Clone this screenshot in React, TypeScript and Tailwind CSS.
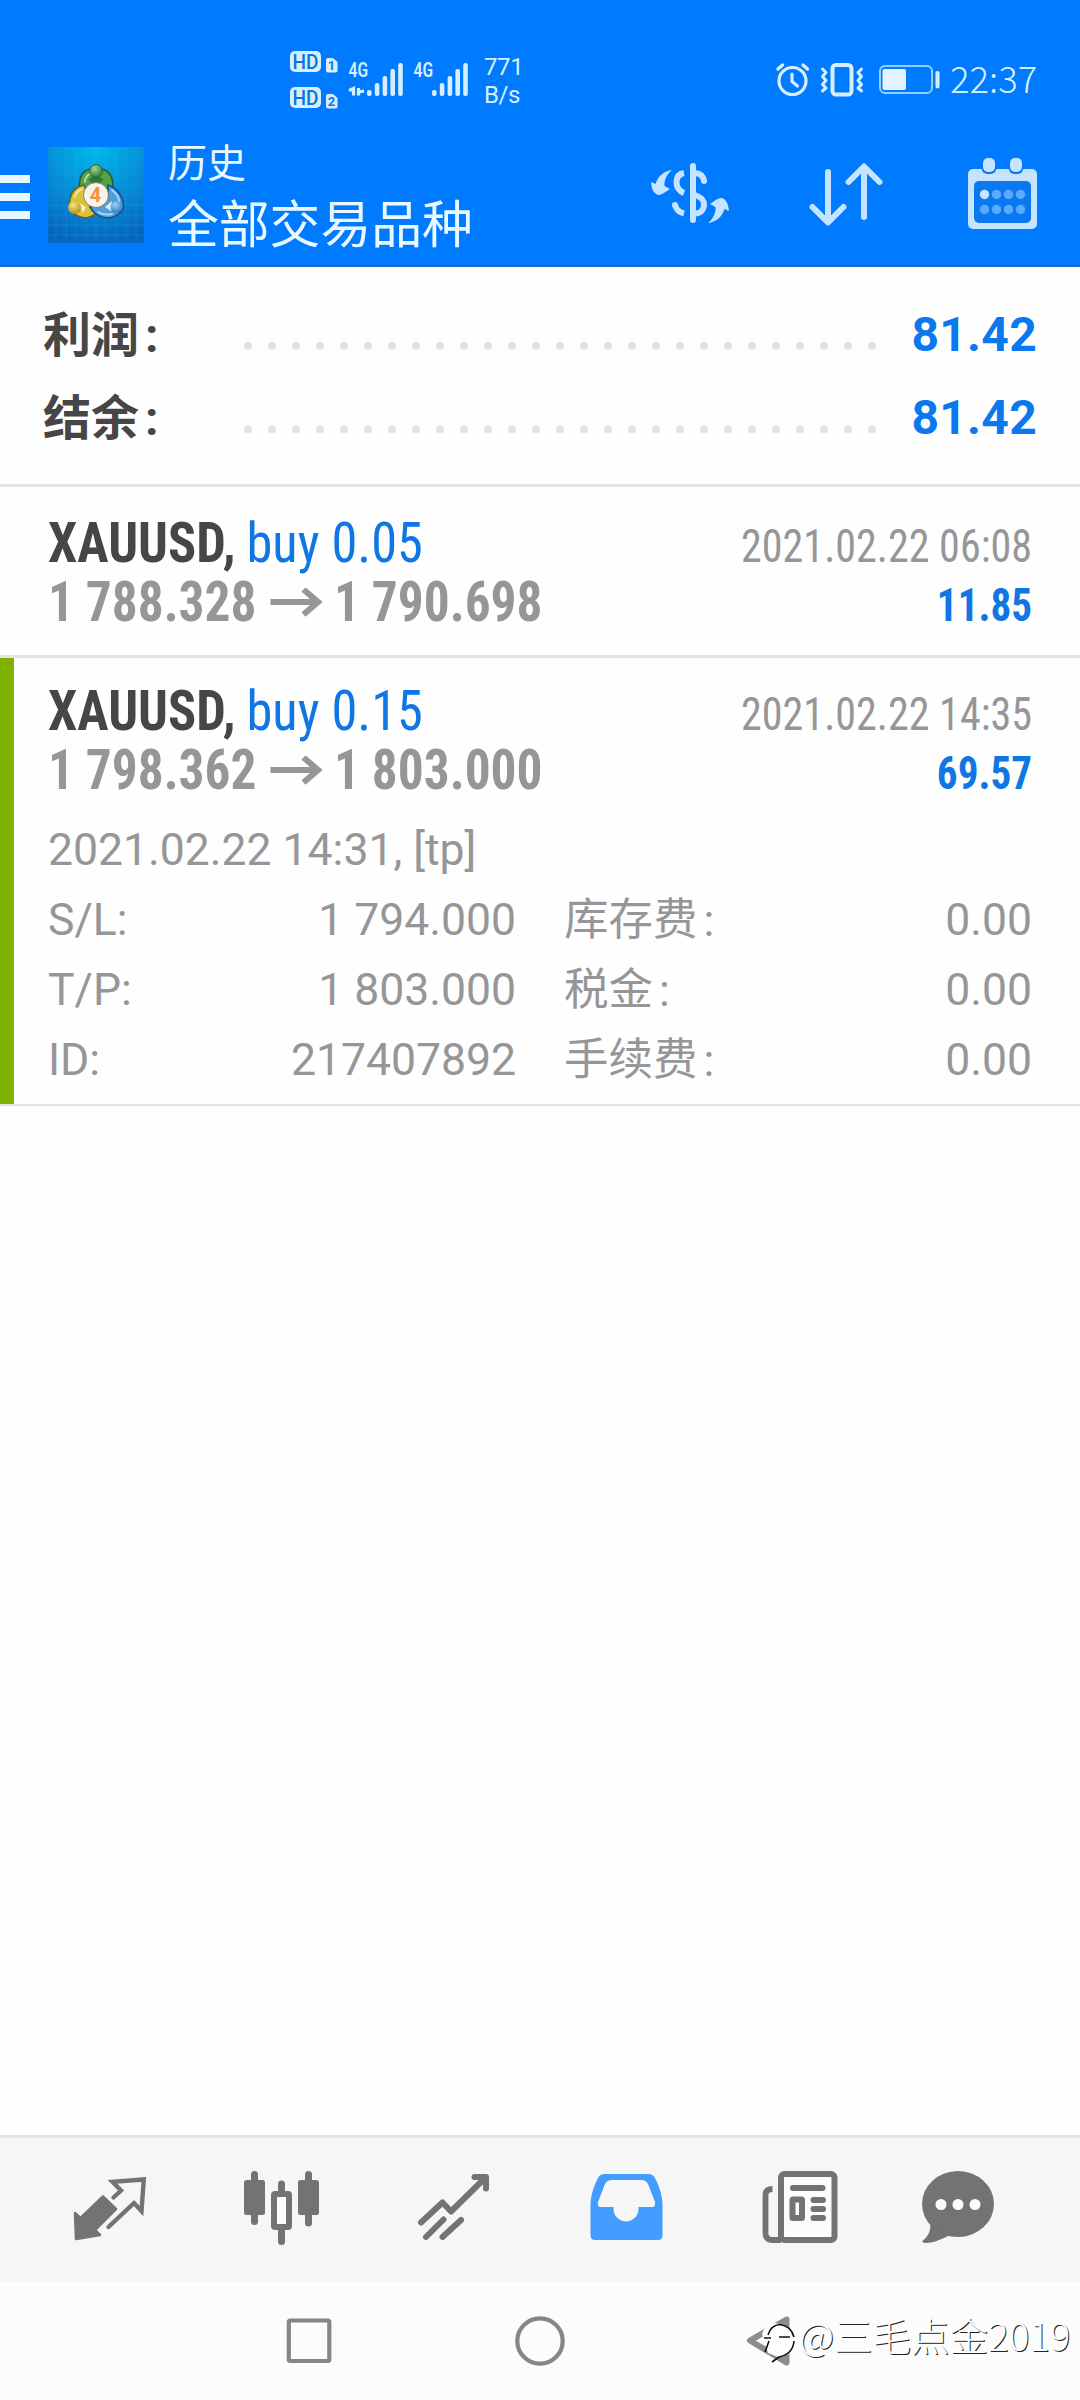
import type { ReactNode } from 'react';

const pale = '#d6efff';
const gray = '#737373';

function SignalBars({ x }: { x: number }) {
  const tops = [90, 83, 76, 69, 63];
  return (
    <g fill={pale}>
      {tops.map((top, i) => (
        <rect key={top} x={x + i * 7.8} y={top} width="4.6" height={96 - top} rx="2" />
      ))}
    </g>
  );
}

function HdBadge({ y, n }: { y: number; n: string }) {
  return (
    <g>
      <rect x="290" y={y} width="31" height="21" rx="5" fill={pale} />
      <text x="305.5" y={y + 17.5} fontSize="20.500" fontWeight="500" textAnchor="middle" textLength="26" lengthAdjust="spacingAndGlyphs" fill="#0c74e4">HD</text>
      <path d={`M326 ${y + 9} q0 -2 2 -2 h5 l4.500 4 v8.500 q0 2 -2 2 h-7.500 q-2 0 -2 -2 z`} fill={pale} />
      <text x="331.500" y={y + 19} fontSize="13" fontWeight="700" textAnchor="middle" fill="#0c74e4">{n}</text>
    </g>
  );
}

function StatusLeft() {
  return (
    <svg className="block h-[70px] w-[186px]" viewBox="286 45 186 70" fontFamily="Roboto, sans-serif">
      <HdBadge y={51} n="1" />
      <HdBadge y={87} n="2" />
      <text x="348.500" y="77" fontSize="20.500" fontWeight="600" textLength="19.500" lengthAdjust="spacingAndGlyphs" fill={pale}>4G</text>
      <path d="M349 90.500 L353.500 88.500 V95.500 M358.500 88 V95.500 M359 92 L364 91" fill="none" stroke={pale} strokeWidth="3.200" />
      <SignalBars x={367} />
      <text x="413.500" y="77" fontSize="20.500" fontWeight="600" textLength="19.500" lengthAdjust="spacingAndGlyphs" fill={pale}>4G</text>
      <SignalBars x={432} />
    </svg>
  );
}

function StatusRight() {
  return (
    <svg className="block h-[50px] w-[172px]" viewBox="772 55 172 50" fill="none" stroke={pale} strokeLinecap="round" strokeLinejoin="round">
      <circle cx="792.500" cy="81" r="13.500" strokeWidth="3.200" />
      <path d="M792 74 V81.500 L797.500 86" strokeWidth="3.200" />
      <path d="M778 69 L782.500 65 M807.500 69 L803 65" strokeWidth="3.400" />
      <rect x="832.500" y="65" width="19" height="29.500" rx="3.500" strokeWidth="4" />
      <path d="M822.500 69 L826 72.500 L822.500 76.500 L826 80.500 L822.500 84.500 L826 88 L822.500 91" strokeWidth="3" />
      <path d="M861.500 69 L858 72.500 L861.500 76.500 L858 80.500 L861.500 84.500 L858 88 L861.500 91" strokeWidth="3" />
      <rect x="880" y="66" width="52" height="27" rx="5" strokeWidth="2" stroke="#8fd0ff" />
      <rect x="882.500" y="69" width="23.500" height="21" rx="2" fill="#e6f2ff" stroke="none" />
      <rect x="935.500" y="71" width="4" height="17.500" rx="2" fill={pale} stroke="none" />
    </svg>
  );
}

function AppLogo() {
  return (
    <svg className="block size-24" viewBox="0 0 96 96">
      <defs>
        <radialGradient id="bg" cx="0.5" cy="0" r="1">
          <stop offset="0" stopColor="#00b9ee" />
          <stop offset="0.5" stopColor="#058fd8" />
          <stop offset="1" stopColor="#0468bf" />
        </radialGradient>
        <radialGradient id="g" cx="0.4" cy="0.3" r="0.8"><stop offset="0" stopColor="#9fd58a" /><stop offset="1" stopColor="#26702f" /></radialGradient>
        <radialGradient id="y" cx="0.4" cy="0.3" r="0.8"><stop offset="0" stopColor="#fbe97a" /><stop offset="1" stopColor="#a88418" /></radialGradient>
        <radialGradient id="b" cx="0.4" cy="0.3" r="0.8"><stop offset="0" stopColor="#9ed4f6" /><stop offset="1" stopColor="#1f70b8" /></radialGradient>
      </defs>
      <rect width="96" height="96" fill="url(#bg)" />
      <path d="M8 0V96M18 0V96M28 0V96M38 0V96M48 0V96M58 0V96M68 0V96M78 0V96M88 0V96M0 8H96M0 18H96M0 28H96M0 38H96M0 48H96M0 58H96M0 68H96M0 78H96M0 88H96" stroke="#4cc3f2" strokeOpacity="0.16" />
      <g strokeLinejoin="round" strokeWidth="1.500">
        <path d="M42 22 C34 24 31 31 31.500 40 L40 44 L48 37 L56 42 L65 40 C65 31 62 24 54 22 Z" fill="#55a24a" stroke="#1d5a35" />
        <path d="M36 38 C26 40 22 48 21.500 56 C20 62 24 69 38 71 C43 70 46 68 49 66 L42 60 L40 48 Z" fill="#dcc23a" stroke="#6b5a1c" />
        <path d="M60 38 C69 41 75 49 75.500 60 C74 66 70 69 62 71 C53 71 46 68 42 60 L52 58 L60 50 Z" fill="#4b9fdc" stroke="#124f86" />
      </g>
      <path d="M37 35 C37 29 41 27 43 27 M27 50 C28 45 31 43 34 42 M64 43 C69 47 71 51 71 54 M50 65 C55 68 60 68 64 67" fill="none" stroke="#fff" strokeOpacity="0.55" strokeWidth="2" strokeLinecap="round" />
      <path d="M30 55 L38 60 L35 66" fill="#f4efc0" />
      <path d="M57 60 L64 54 L63 64" fill="#d8eefc" />
      <path d="M40 33 L48 38 L56 33 L52 30 H44 Z" fill="#2f7d35" />
      <circle cx="48" cy="24" r="6.500" fill="url(#g)" stroke="#1d5a35" strokeWidth="0.800" />
      <circle cx="26.500" cy="60.500" r="6.500" fill="url(#y)" />
      <circle cx="68.500" cy="60" r="6" fill="url(#b)" />
      <circle cx="48" cy="48" r="12.500" fill="#f6f3ee" stroke="#7d6a3c" strokeWidth="0.800" />
      <text x="47.500" y="55" fontFamily="Roboto, sans-serif" fontSize="20" fontWeight="700" textAnchor="middle" fill="#f3943c">4</text>
    </svg>
  );
}

const swoosh = 'M672 170 C664 171 658 176 655.500 184 L651 182 C651.500 188 653 192 656 194 C660 197 665 192 670 189 L664.500 186 C664 180 667 174 672 170 Z';

function DollarIcon() {
  return (
    <svg className="block h-[70px] w-[90px]" viewBox="645 160 90 70" fill="none" stroke="#c6e3ff" strokeWidth="6">
      <path d={swoosh} fill="#c6e3ff" stroke="none" />
      <path d={swoosh} transform="rotate(180 690 196.500)" fill="#c6e3ff" stroke="none" />
      <path d="M693 166 V220" strokeLinecap="round" />
      <path d="M684 173 C678 174 676.500 178 676.500 182 C676.500 187 679 191 684 193" />
      <path d="M684 213.500 C679.500 212.500 676.500 210 675 205" />
      <circle cx="675" cy="205" r="3" fill="#c6e3ff" stroke="none" />
      <path d="M695 173 C700 173.500 703.500 176 704 181" />
      <circle cx="704" cy="181" r="3" fill="#c6e3ff" stroke="none" />
      <path d="M695 195 C701 197 704 200 704 204.500 C704 210 700 213.500 695 213.500" />
    </svg>
  );
}

function SortIcon() {
  return (
    <svg className="block h-[70px] w-[80px]" viewBox="806 160 80 70" fill="none" stroke="#c6e3ff" strokeWidth="6" strokeLinecap="round" strokeLinejoin="round">
      <path d="M828 172 V222 M812.500 207 L828 222.500 L843.500 207" />
      <path d="M864 217 V167 M848.500 182 L864 166.500 L879.500 182" />
    </svg>
  );
}

function CalendarIcon() {
  const xs = [984.5, 996.5, 1008.5, 1020.5];
  return (
    <svg className="block h-[74px] w-[71px]" viewBox="967 157 71 74">
      <rect x="968" y="169" width="69" height="60" rx="5" fill="#c6e3ff" />
      <rect x="974" y="181" width="57" height="42" rx="5" fill="#0a78ee" />
      <rect x="981.500" y="156.500" width="15" height="17.500" rx="6" fill="#0a78ee" />
      <rect x="1008.500" y="156.500" width="15" height="17.500" rx="6" fill="#0a78ee" />
      <rect x="983" y="158" width="12" height="14" rx="5" fill="#c6e3ff" />
      <rect x="1010" y="158" width="12" height="14" rx="5" fill="#c6e3ff" />
      {[194.5, 209.5].map((y) => xs.map((x) => <circle key={`${x}-${y}`} cx={x} cy={y} r="4.700" fill={x === 984.5 && y === 194.5 ? '#c6e8ff' : '#5aabff'} />))}
    </svg>
  );
}

function SummaryRow({ label, value }: { label: string; value: string }) {
  return (
    <div className="flex h-[83px] items-center justify-between pr-[43px] pl-[43px] text-[48px] leading-[83px] font-bold">
      <span className="w-[201px] pt-[2px] text-[#464646]">{label}<span className="ml-[6px]">:</span></span>
      <div className="flex h-full flex-1 gap-4 pt-[49px]">
        {Array.from({ length: 27 }, (_, i) => <i key={i} className="size-2 rounded-full bg-[#e2e2e2]" />)}
      </div>
      <span className="tracking-[0.3px] text-[#0a78ee]">{value}</span>
    </div>
  );
}

type Deal = { volume: string; open: string; close: string; time: string; profit: string };

function DealHead({ volume, open, close, time, profit }: Deal) {
  return (
    <div className="flex justify-between pr-12 pl-12 font-stretch-condensed">
      <div className="w-[560px] text-[55px] leading-[59px] whitespace-nowrap">
        <div className="origin-left scale-x-[0.952]"><b className="-mr-px text-[#464646]">XAUUSD,</b> <span className="text-[#0f76e4]">buy {volume}</span></div>
        <div className="flex origin-left scale-x-[0.934] items-center font-bold text-[#969698]">
          {open}
          <svg className="mr-3 ml-[15px] h-[30px] w-[56px]" viewBox="0 0 52 30" preserveAspectRatio="none" fill="none" stroke="#969698" strokeWidth="6"><path d="M0 14 H47 M33 1.500 L47.500 14 L33 26.500" /></svg>
          {close}
        </div>
      </div>
      <div className="pt-[3px] text-right text-[46px] leading-[59px] whitespace-nowrap">
        <div className="origin-right scale-x-[0.915] text-[#969698]">{time}</div>
        <div className="origin-right scale-x-[0.895] font-bold text-[#0f76e4]">{profit}</div>
      </div>
    </div>
  );
}

const details = [
  ['S/L:', '1 794.000', '库存费', '0.00'],
  ['T/P:', '1 803.000', '税金', '0.00'],
  ['ID:', '217407892', '手续费', '0.00'],
];

function Tab({ box, className, children }: { box: string; className: string; children: ReactNode }) {
  return <svg className={className} viewBox={box} fill="none" strokeLinecap="round" strokeLinejoin="round">{children}</svg>;
}

function TabBar() {
  return (
    <nav className="flex h-[147px] shrink-0 items-start border-t-3 border-[#e4e4e4] bg-[#f6f6f6] pt-[27px] pl-[70px]">
      <Tab className="mr-[92px] h-[84px] w-[80px]" box="70 2165 80 84">
        <path d="M75 2213 L80.500 2218 L103 2196.500 L116 2209 L95 2230 L100 2235 L76 2239 Z" fill={gray} stroke={gray} strokeWidth="2.500" />
        <path d="M113.500 2197.500 L121 2190.500 L112.500 2181.800 L143.800 2179.500 L141.500 2211 L134 2203 L108.500 2227" stroke={gray} strokeWidth="4.400" strokeLinejoin="miter" />
      </Tab>
      <Tab className="mr-[92px] h-[84px] w-[80px]" box="242 2165 80 84">
        <path d="M254.500 2174.500 V2221.500 M281.500 2184 V2195 M281.500 2226 V2241.500 M308.500 2174.500 V2223" stroke={gray} strokeWidth="7" />
        <rect x="244" y="2180" width="21" height="35" rx="2.500" fill={gray} />
        <rect x="298" y="2180" width="21" height="35" rx="2.500" fill={gray} />
        <rect x="274" y="2194" width="15" height="33" rx="1" stroke={gray} strokeWidth="6" fill="#fcfcfc" />
      </Tab>
      <Tab className="mr-[92px] h-[84px] w-[80px]" box="414 2165 80 84">
        <path d="M421 2222.500 L442.500 2202.500 L451 2211.500 L484 2179" stroke={gray} strokeWidth="6" />
        <path d="M474.500 2177 H486 V2188.500" stroke={gray} strokeWidth="6" />
        <path d="M426 2237 L443.500 2219.500 M442.500 2237 L461 2220" stroke={gray} strokeWidth="6" />
      </Tab>
      <Tab className="mr-[92px] h-[84px] w-[80px]" box="586 2165 80 84">
        <path fill="#439cff" fillRule="evenodd" d="M605 2174 H648 Q653 2174 655 2178 C661 2190 662.500 2198 662.500 2206 V2235 Q662.500 2240 658 2240 H595 Q590.500 2240 590.500 2235 V2206 C590.500 2198 592 2190 598 2178 Q600 2174 605 2174 Z M612 2180 Q607 2180 605 2184 L598 2202 Q597 2207 601 2207 H613.500 V2209 A12.500 12.500 0 0 0 638.500 2209 V2207 H652 Q656 2207 655 2202 L648 2184 Q646 2180 641 2180 Z" />
      </Tab>
      <Tab className="mr-[82px] h-[84px] w-[80px]" box="758 2165 80 84">
        <rect x="781" y="2174" width="53.500" height="66" rx="3.500" stroke={gray} strokeWidth="6" fill="#fcfcfc" />
        <path d="M772.500 2189 Q765.500 2189 765.500 2195 V2233 Q765.500 2240 772 2240 H781" stroke={gray} strokeWidth="5.800" strokeLinecap="butt" />
        <path d="M793 2188 H822.500" stroke={gray} strokeWidth="6" />
        <rect x="792.500" y="2199.500" width="9.500" height="18.500" rx="0.500" stroke={gray} strokeWidth="6" />
        <path d="M813.500 2200 H823 M813.500 2209 H823 M813.500 2218 H823" stroke={gray} strokeWidth="6" />
      </Tab>
      <Tab className="h-[84px] w-[80px]" box="920 2165 80 84">
        <ellipse cx="958" cy="2204" rx="36" ry="33" fill={gray} />
        <path d="M930 2222 C932 2232 926 2238 922 2241.500 Q923 2243.500 928 2242.800 C936 2242 941 2239.500 949 2235.500 Z" fill={gray} />
        <g fill="#fcfcfc"><circle cx="941" cy="2204.500" r="5.500" /><circle cx="958" cy="2204.500" r="5.500" /><circle cx="975" cy="2204.500" r="5.500" /></g>
      </Tab>
    </nav>
  );
}

function SystemNav() {
  return (
    <div className="relative h-[118px] shrink-0 bg-[#fcfcfc]">
      <div className="flex pt-[29px] pl-[284px]">
        <svg className="mr-[177px] h-[60px] w-[50px]" viewBox="284 2311 50 60" fill="none" stroke="#868686" strokeWidth="4.200"><rect x="288.800" y="2320.500" width="40.500" height="40.500" rx="1.500" /></svg>
        <svg className="mr-[176px] h-[60px] w-[58px]" viewBox="511 2311 58 60" fill="none" stroke="#868686" strokeWidth="4.200"><circle cx="540" cy="2341" r="22.700" /></svg>
        <svg className="h-[60px] w-[52px]" viewBox="745 2311 52 60" fill="none">
          <path d="M786.500 2319.500 L750 2340.500 L786.500 2362.500 Z" stroke="#8c8c8c" strokeWidth="6" strokeLinejoin="round" />
          <path d="M762 2334 Q765 2324 776 2323 L794 2330 L796 2345 Q792 2356 778 2357 L768 2353 Z" fill="#fdfdfd" />
          <path d="M768 2335 Q771 2325 780 2324.500 Q791 2326 794 2337 M764 2338 H771 M769 2341 L765 2352 M779 2337 H790 M794 2341 Q793 2354 779 2357 L772 2362" stroke="#111" strokeWidth="1.600" />
        </svg>
      </div>
      <span className="absolute top-[27px] left-[799px] font-['Noto_Sans_CJK_SC',sans-serif] text-[38.5px] leading-[50px] font-light whitespace-nowrap text-white [text-shadow:1px_1px_0.5px_#222]">@三毛点金2019</span>
    </div>
  );
}

export default function App() {
  return (
    <div className="flex h-[2400px] w-[1080px] flex-col overflow-hidden bg-[#fefefe] font-[Roboto,'Noto_Sans_CJK_SC',sans-serif]">
      <header className="h-[267px] shrink-0 border-b-2 border-[#1b6dc0] bg-[#007aff]">
        <div className="flex h-[130px] items-start pl-[286px] text-[#d6efff]">
          <div className="pt-[45px]"><StatusLeft /></div>
          <div className="ml-3 w-[288px] pt-[53px] text-[24px] leading-[28px] tracking-[-0.4px]">771<br />B/s</div>
          <div className="pt-[55px]"><StatusRight /></div>
          <span className="ml-[6px] pt-[53px] font-['Noto_Sans_CJK_SC',sans-serif] text-[36.5px] leading-[50px] font-light">22:37</span>
        </div>
        <div className="flex">
          <div className="mt-[45px] mr-[18px] flex w-[30px] flex-col gap-[10px]">
            <i className="h-2 bg-[#e8f8ff]" /><i className="h-2 bg-[#e8f8ff]" /><i className="h-2 bg-[#e8f8ff]" />
          </div>
          <div className="pt-[17px]"><AppLogo /></div>
          <div className="ml-6 w-[477px] text-[#eaf9ff]">
            <div className="pt-2 text-[39px] leading-[52px]">历史</div>
            <div className="pt-px text-[50.8px] leading-[70px]">全部交易品种</div>
          </div>
          <div className="pt-[30px]"><DollarIcon /></div>
          <div className="ml-[71px] pt-[30px]"><SortIcon /></div>
          <div className="ml-[81px] pt-[27px]"><CalendarIcon /></div>
        </div>
      </header>
      <section className="h-[220px] shrink-0 border-b-3 border-[#e4e4e4] pt-[26px]">
        <SummaryRow label="利润" value="81.42" />
        <SummaryRow label="结余" value="81.42" />
      </section>
      <section className="h-[171px] shrink-0 border-b-3 border-[#e4e4e4] pt-[27px]">
        <DealHead volume="0.05" open="1 788.328" close="1 790.698" time="2021.02.22 06:08" profit="11.85" />
      </section>
      <section className="relative h-[448px] shrink-0 border-b-2 border-[#e4e4e4] pt-6">
        <i className="absolute top-0 left-0 h-full w-[14px] bg-[#80b000]" />
        <DealHead volume="0.15" open="1 798.362" close="1 803.000" time="2021.02.22 14:35" profit="69.57" />
        <div className="pt-3 pl-12 text-[44.5px] leading-[70px] text-[#969698]">
          <div>2021.02.22 14:31, [tp]</div>
          {details.map(([name, price, fee, amount]) => (
            <div key={name} className="flex pr-12">
              <span className="w-[160px]">{name}</span>
              <span className="w-[308px] text-right">{price}</span>
              <span className="ml-12 flex-1">{fee}<span className="relative top-px ml-[6px]">:</span></span>
              <span>{amount}</span>
            </div>
          ))}
        </div>
      </section>
      <div className="flex-1" />
      <TabBar />
      <SystemNav />
    </div>
  );
}
